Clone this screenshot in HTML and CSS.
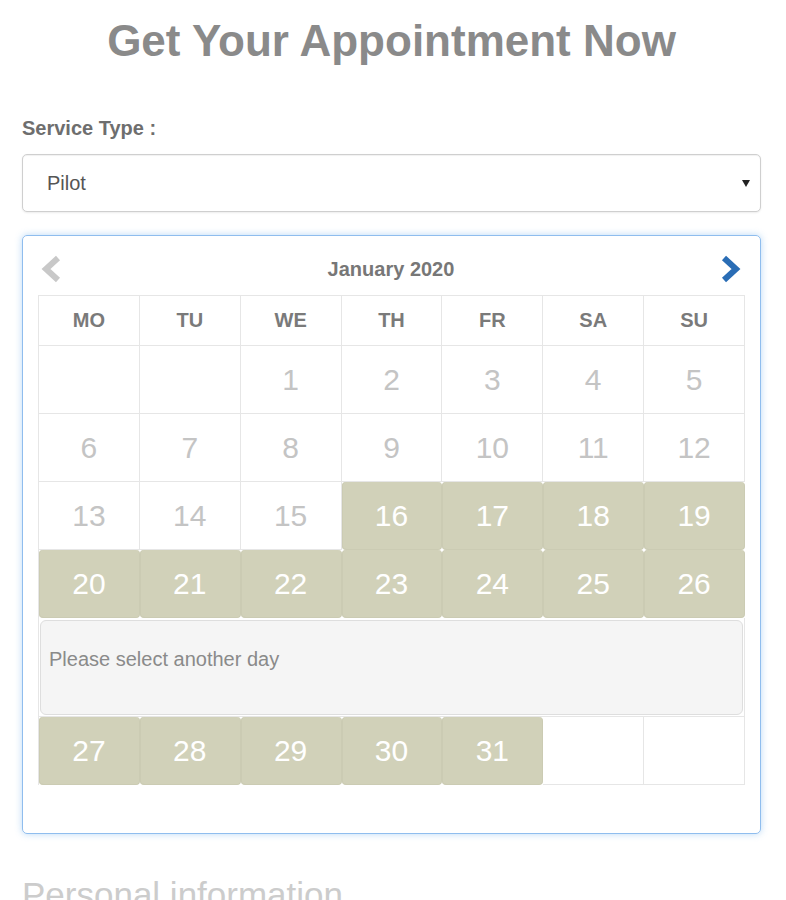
FILE: index.html
```html
<!DOCTYPE html>
<html lang="en">
<head>
<meta charset="utf-8">
<title>Get Your Appointment Now</title>
<link rel="stylesheet" href="styles.css">
</head>
<body>
<div class="page">
  <h1 class="title">Get Your Appointment Now</h1>

  <label class="field-label" for="service">Service Type :</label>
  <div class="select-wrap">
    <select id="service" class="select">
      <option>Pilot</option>
    </select>
    <svg class="select-arrow" width="8" height="7" viewBox="0 0 8 7"><polygon points="0,0 8,0 4,7" fill="#222"/></svg>
  </div>

  <div class="calendar">
    <div class="cal-nav">
      <svg class="nav-arrow" width="24" height="30" viewBox="0 0 24 30"><polyline points="18,4 6,15 18,26" fill="none" stroke="#c8c8c8" stroke-width="6" stroke-linejoin="miter"/></svg>
      <div class="cal-month">January 2020</div>
      <svg class="nav-arrow" width="24" height="30" viewBox="0 0 24 30"><polyline points="6,4 18,15 6,26" fill="none" stroke="#2a6db5" stroke-width="6" stroke-linejoin="miter"/></svg>
    </div>

    <div class="cal-grid">
      <div class="cell head">MO</div>
      <div class="cell head">TU</div>
      <div class="cell head">WE</div>
      <div class="cell head">TH</div>
      <div class="cell head">FR</div>
      <div class="cell head">SA</div>
      <div class="cell head">SU</div>

      <div class="cell"></div>
      <div class="cell"></div>
      <div class="cell off">1</div>
      <div class="cell off">2</div>
      <div class="cell off">3</div>
      <div class="cell off">4</div>
      <div class="cell off">5</div>

      <div class="cell off">6</div>
      <div class="cell off">7</div>
      <div class="cell off">8</div>
      <div class="cell off">9</div>
      <div class="cell off">10</div>
      <div class="cell off">11</div>
      <div class="cell off">12</div>

      <div class="cell off">13</div>
      <div class="cell off">14</div>
      <div class="cell off">15</div>
      <div class="cell on">16</div>
      <div class="cell on">17</div>
      <div class="cell on">18</div>
      <div class="cell on">19</div>

      <div class="cell on">20</div>
      <div class="cell on">21</div>
      <div class="cell on">22</div>
      <div class="cell on">23</div>
      <div class="cell on">24</div>
      <div class="cell on">25</div>
      <div class="cell on">26</div>

      <div class="cell message-row">
        <div class="message">Please select another day</div>
      </div>

      <div class="cell on">27</div>
      <div class="cell on">28</div>
      <div class="cell on">29</div>
      <div class="cell on">30</div>
      <div class="cell on">31</div>
      <div class="cell"></div>
      <div class="cell"></div>
    </div>
  </div>

  <h2 class="section-title">Personal information</h2>
</div>
</body>
</html>
```

FILE: styles.css
```css
html, body {
  margin: 0;
  padding: 0;
  overflow: hidden;
  background: #fff;
}

body {
  font-family: "Liberation Sans", Arial, sans-serif;
  color: #555;
}

.page {
  padding: 0 25px 0 22px;
}

.title {
  margin: 17px 0 0;
  font-size: 44px;
  line-height: 48px;
  font-weight: bold;
  color: #8a8a8a;
  text-align: center;
}

.field-label {
  display: block;
  margin-top: 51px;
  font-size: 20px;
  line-height: 24px;
  font-weight: bold;
  color: #6e6e6e;
}

.select-wrap {
  position: relative;
  margin-top: 14px;
}

.select {
  display: block;
  width: 100%;
  height: 58px;
  box-sizing: border-box;
  margin: 0;
  padding: 0 24px;
  font-family: "Liberation Sans", Arial, sans-serif;
  font-size: 20px;
  color: #555;
  background: #fff;
  border: 1px solid #cfcfcf;
  border-radius: 5px;
  box-shadow: inset 0 1px 1px rgba(0, 0, 0, 0.06), 0 1px 2px rgba(0, 0, 0, 0.08);
  appearance: none;
  -webkit-appearance: none;
  outline: none;
}

.select-arrow {
  position: absolute;
  right: 11px;
  top: 26px;
}

.calendar {
  margin-top: 23px;
  border: 1px solid #8fbdee;
  border-radius: 5px;
  box-shadow: 0 0 7px rgba(102, 170, 235, 0.45);
  padding: 0 15px 48px;
}

.cal-nav {
  height: 59px;
  box-sizing: border-box;
  padding: 7px 3px 0 2px;
  display: flex;
  align-items: center;
  justify-content: space-between;
}

.nav-arrow {
  display: block;
}

.cal-month {
  font-size: 20px;
  line-height: 24px;
  font-weight: bold;
  color: #777;
}

.cal-grid {
  display: grid;
  grid-template-columns: repeat(7, 1fr);
  grid-template-rows: 50px repeat(4, 68px) 99px 68px;
  border-top: 1px solid #e6e6e6;
  border-left: 1px solid #e6e6e6;
}

.cell {
  box-sizing: border-box;
  border-right: 1px solid #e6e6e6;
  border-bottom: 1px solid #e6e6e6;
  display: flex;
  align-items: center;
  justify-content: center;
  font-size: 30px;
}

.cell.head {
  font-size: 20px;
  font-weight: bold;
  color: #7a7a7a;
}

.cell.off {
  color: #c4c4c4;
}

.cell.on {
  background: #d1d1b9;
  color: #fff;
  border-radius: 4px;
  border-color: #cbcbb3;
  box-shadow: inset 1px 0 0 #cbcbb3;
}

.cell.message-row {
  grid-column: 1 / -1;
  display: block;
  padding: 2px 1px 0 1px;
}

.message {
  height: 95px;
  box-sizing: border-box;
  padding: 26px 8px 0;
  background: #f5f5f5;
  border: 1px solid #dedede;
  border-radius: 6px;
  font-size: 20px;
  line-height: 24px;
  color: #8a8a8a;
}

.section-title {
  margin: 41px 0 0;
  font-size: 35px;
  line-height: 40px;
  font-weight: normal;
  color: #cccccc;
}
```
